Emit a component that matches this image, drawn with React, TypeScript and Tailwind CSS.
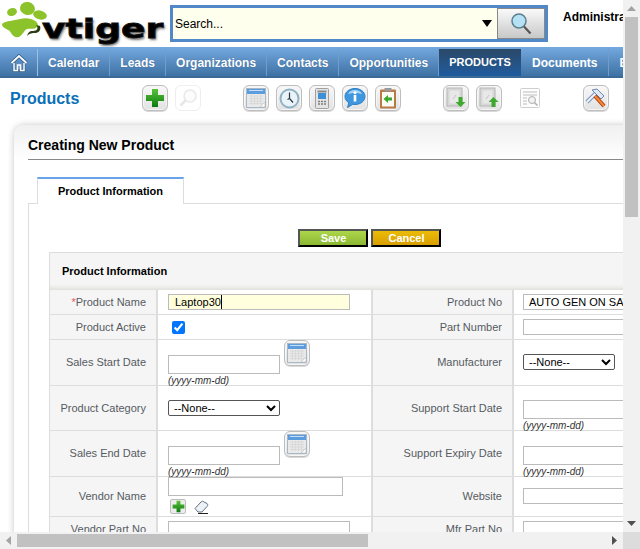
import React from "react";

const FONT = "font-['Liberation_Sans',Arial,sans-serif]";

function Frame({ children, faded }: { children: React.ReactNode; faded?: boolean }) {
  return (
    <div
      className={
        faded
          ? "w-[26px] h-[26px] rounded-[6px] border border-[#eeeeee] bg-white flex items-center justify-center shrink-0"
          : "w-[26px] h-[26px] rounded-[6px] border border-[#bdbdbd] bg-gradient-to-b from-[#f8f8f8] to-[#e2e2e2] flex items-center justify-center shrink-0 shadow-[inset_0_0_0_1px_#f6f6f6,0_1px_0_#d8d8d8]"
      }
    >
      {children}
    </div>
  );
}

const PlusIcon = ({ s = 20 }: { s?: number }) => (
  <svg width={s} height={s} viewBox="0 0 20 20">
    <defs>
      <linearGradient id="pg" x1="0" y1="0" x2="0" y2="1">
        <stop offset="0" stopColor="#58c43a" />
        <stop offset="1" stopColor="#0d7a10" />
      </linearGradient>
    </defs>
    <path d="M7 1h6v6h6v6h-6v6H7v-6H1V7h6z" fill="url(#pg)" />
  </svg>
);

const SearchFaded = () => (
  <svg width="20" height="20" viewBox="0 0 20 20" fill="none">
    <circle cx="12" cy="8" r="6" stroke="#e8e8e8" strokeWidth="1.5" fill="#fcfcfc" />
    <path d="M7.5 12.500L2.500 17.500" stroke="#e6e6e6" strokeWidth="2.500" />
  </svg>
);

const CalIcon = ({ s = 20 }: { s?: number }) => (
  <svg width={s} height={s} viewBox="0 0 20 20">
    <rect x="0.500" y="0.500" width="19" height="19" fill="#e9e9e9" stroke="#a9b8c6" />
    <rect x="1" y="1" width="18" height="5" fill="#5d9ddd" />
    <rect x="3" y="2" width="14" height="1" fill="#c5def4" />
    <path d="M3 8h14M3 10.500h14M3 13h14M3 15.500h14M5.500 7v10M8.500 7v10M11.500 7v10M14.500 7v10" stroke="#d6d6d6" strokeWidth="0.800" />
    <path d="M14 19l5-5v5z" fill="#fbfbfb" stroke="#bbbbbb" strokeWidth="0.600" />
  </svg>
);

const ClockIcon = () => (
  <svg width="21" height="21" viewBox="0 0 21 21" fill="none">
    <circle cx="10.500" cy="10.500" r="9" fill="#e9f3f8" stroke="#8fb2c4" strokeWidth="2" />
    <path d="M10.500 4.500v6l3.500 4M10.500 10.500l-2 1" stroke="#2a3a44" strokeWidth="1.200" />
  </svg>
);

const CalcIcon = () => (
  <svg width="14" height="21" viewBox="0 0 14 21">
    <rect x="0.500" y="0.500" width="13" height="20" rx="1" fill="#e4e4e4" stroke="#a0a0a0" />
    <rect x="2.500" y="2.500" width="9" height="2" fill="#8a8a8a" />
    <rect x="3" y="5" width="8" height="6" fill="#3f8fd8" />
    <path d="M3 13.500h2M6 13.500h2M9 13.500h2M3 16h2M6 16h2M9 16h2" stroke="#7f7f7f" strokeWidth="1.500" />
  </svg>
);

const ChatIcon = () => (
  <svg width="22" height="22" viewBox="0 0 22 22">
    <path d="M11 1.500c5.500 0 10 3.400 10 8s-4.500 8-10 8c-.8 0-1.500 0-2.200-.2L3.500 20.500l1.300-4.700C2.400 14.300 1 12 1 9.500c0-4.600 4.500-8 10-8z" fill="#3f97e0" stroke="#2f7fc8" />
    <path d="M4 7c1.500-3 4-4 7-4s5.500 1 7 4c-4-1.500-10-1.500-14 0z" fill="#a9d6f6" />
    <rect x="9.700" y="8" width="2.600" height="6.500" fill="#ffffff" />
    <circle cx="11" cy="5.800" r="1.500" fill="#ffffff" />
  </svg>
);

const ClipIcon = () => (
  <svg width="18" height="22" viewBox="0 0 18 22">
    <rect x="1" y="2.500" width="16" height="19" rx="1" fill="#b87b46" />
    <rect x="3" y="5" width="12" height="14.500" fill="#fbfbf4" />
    <rect x="5.500" y="1" width="7" height="3.500" fill="#9a9a9a" />
    <path d="M4.500 12l4.500-4v2.500h4v3H9V16z" fill="#39a72c" />
  </svg>
);

const DocArrow = ({ up }: { up?: boolean }) => (
  <svg width="22" height="22" viewBox="0 0 22 22">
    <rect x="2" y="1" width="15" height="18" fill="#dcdcdc" stroke="#b4b4b4" />
    <rect x="4" y="3" width="11" height="14" fill="#e8e8e8" stroke="#cfcfcf" strokeWidth="0.700" />
    <path d="M8 12l3-4" stroke="#c4c4c4" />
    {up ? (
      <path d="M15.500 10l5 5h-3v5h-4v-5h-3z" fill="#3ea92e" />
    ) : (
      <path d="M13.500 10h4v5h3l-5 5-5-5h3z" fill="#3ea92e" />
    )}
  </svg>
);

const FindIcon = () => (
  <svg width="20" height="20" viewBox="0 0 20 20" fill="none">
    <rect x="0.500" y="0.500" width="19" height="19" rx="1" stroke="#cfcfcf" fill="#fdfdfd" />
    <path d="M3 4h14M3 7h14M3 10h4M3 13h4M3 16h4" stroke="#bcbcbc" />
    <circle cx="12" cy="12" r="3.500" stroke="#adadad" fill="#f2f2f2" />
    <path d="M14.500 14.500l3 3" stroke="#adadad" strokeWidth="1.500" />
  </svg>
);

const HammerIcon = () => (
  <svg width="22" height="22" viewBox="0 0 22 22" fill="none">
    <path d="M2 15l9-9" stroke="#7794be" strokeWidth="4" />
    <path d="M2 15l9-9" stroke="#eef3fa" strokeWidth="2" />
    <path d="M7 3l5-1 7 7-3 3-6-6z" fill="#dfe8f4" stroke="#6e86ab" />
    <path d="M10 9l9 10" stroke="#b03a10" strokeWidth="4" />
    <path d="M10 9l9 10" stroke="#f58a32" strokeWidth="2" />
  </svg>
);

const HomeIcon = () => (
  <svg width="18" height="18" viewBox="0 0 18 18" fill="none">
    <path d="M1.500 9L9 2l7.500 7" stroke="#2f5a85" strokeWidth="3.400" />
    <path d="M4 9v7.500h10V9" fill="#5d8fc0" stroke="#2f5a85" strokeWidth="2.600" />
    <path d="M1.500 9L9 2l7.500 7" stroke="#ffffff" strokeWidth="1.800" />
    <path d="M4 9v7.500h3.500V11h3v5.500H14V9" stroke="#ffffff" strokeWidth="1.500" />
  </svg>
);

const Logo = () => (
  <div className="relative w-[170px] h-[47px] shrink-0 overflow-hidden">
    <svg className="absolute left-0 top-0" width="52" height="44" viewBox="0 0 52 44">
      <g fill="#8dc32a">
        <ellipse cx="12" cy="12" rx="5" ry="4" transform="rotate(-15 12 12)" />
        <ellipse cx="27.500" cy="8.500" rx="7.500" ry="6.500" transform="rotate(10 27.500 8.500)" />
        <ellipse cx="40" cy="15" rx="7" ry="4.500" transform="rotate(15 40 15)" />
        <path d="M2 24c3-3 9-3 13-4 5-1 10-3 16-1 6 2 8 5 6 8-3 3-7 1-10 2-3 1-4 6-8 8-4 1-6-1-8-4-1-4-9-4-9-9z" />
      </g>
      <path d="M36 25c3 3 1 6-3 6-4 0-5 2-6 5 3-3 5-3 9-3 4-1 5-4 4-7z" fill="#2e3a12" />
    </svg>
    <span className="absolute left-[42px] top-[13px] block origin-left scale-x-[1.39] font-['DejaVu_Sans',sans-serif] font-bold text-[26px] leading-[32px] text-black [-webkit-text-stroke:0.8px_#111] [text-shadow:1px_2px_2px_rgba(0,0,0,0.55)]">
      vtiger
    </span>
  </div>
);

const nav = ["Calendar", "Leads", "Organizations", "Contacts", "Opportunities"];

function Nav() {
  return (
    <div className="h-[31px] bg-gradient-to-b from-[#74a9e0] to-[#3f72a4] border-b-2 border-b-[#3c6a96] flex items-stretch shrink-0 text-white font-bold text-[12px]">
      <div className="w-[38px] flex items-center justify-center border-r border-r-[#9cc0e2] mt-[2px] shrink-0">
        <HomeIcon />
      </div>
      {nav.map((n) => (
        <div key={n} className="px-[10px] flex items-center border-r border-r-[#6f9dca] mt-[2px] shrink-0 [text-shadow:0_0_1px_rgba(40,70,110,0.6)]">
          {n}
        </div>
      ))}
      <div className="w-[82px] flex items-center justify-center shrink-0 mt-[2px] text-[11px] bg-gradient-to-b from-[#2a4867] to-[#1f5c9f]">
        PRODUCTS
      </div>
      <div className="px-[11px] flex items-center border-r border-r-[#6f9dca] mt-[2px] shrink-0">Documents</div>
      <div className="px-[10px] flex items-center mt-[2px] shrink-0">Email</div>
    </div>
  );
}

function Toolbar() {
  return (
    <div className="h-[47px] flex items-start pt-[7px] shrink-0 bg-white">
      <div className="w-[142px] pl-[10px] text-[16px] font-bold text-[#0a70b8] leading-[28px] shrink-0">Products</div>
      <div className="flex gap-[7px] shrink-0">
        <Frame><PlusIcon /></Frame>
        <Frame faded><SearchFaded /></Frame>
      </div>
      <div className="flex gap-[7px] ml-[42px] shrink-0">
        <Frame><CalIcon /></Frame>
        <Frame><ClockIcon /></Frame>
        <Frame><CalcIcon /></Frame>
        <Frame><ChatIcon /></Frame>
        <Frame><ClipIcon /></Frame>
      </div>
      <div className="flex gap-[7px] ml-[42px] shrink-0">
        <Frame><DocArrow /></Frame>
        <Frame><DocArrow up /></Frame>
      </div>
      <div className="ml-[18px] mt-[3px] shrink-0"><FindIcon /></div>
      <div className="ml-[43px] shrink-0"><Frame><HammerIcon /></Frame></div>
    </div>
  );
}

const inputBase = "block h-[16px] border border-[#bbbbbb] bg-white text-[11px] px-[5px] text-black outline-none";
const dateInput = "block w-[112px] h-[19px] border border-[#bbbbbb] bg-white";

function Fmt() {
  return <div className="text-[10px] italic leading-[11px] text-[#333]">(yyyy-mm-dd)</div>;
}

function Label({ children }: { children: React.ReactNode }) {
  return (
    <div className="bg-[#f5f5f5] flex items-center justify-end pr-[10px] text-[11px] text-[#555b62] border-r-2 border-r-[#dddddd] border-b border-b-[#dddddd]">
      {children}
    </div>
  );
}

function Value({ children, border = true, left = true }: { children?: React.ReactNode; border?: boolean; left?: boolean }) {
  return (
    <div className={`${left ? "pl-[10px]" : "pl-[9px]"} bg-white border-b border-b-[#dddddd] ${border ? "border-r-2 border-r-[#dddddd]" : ""}`}>
      {children}
    </div>
  );
}

function DateWithIcon() {
  return (
    <div className="flex items-start">
      <div className="mt-[15px]">
        <div className={dateInput} />
        <div className="mt-[1px]"><Fmt /></div>
      </div>
      <div className="ml-[4px]">
        <Frame><CalIcon /></Frame>
      </div>
    </div>
  );
}

function Table() {
  return (
    <div className="w-[900px] border-l border-l-[#dddddd]">
      <div className="h-[38px] bg-[#f5f5f5] border-t border-t-[#dddddd] flex items-center pl-[12px] pb-[1px] text-[11px] font-bold text-black shadow-[inset_0_-5px_4px_-3px_#dcdcd8]">
        Product Information
      </div>
      <div className="grid grid-cols-[108px_215px_141px_1fr] grid-rows-[25px_25px_46px_45px_46px_40px_25px] leading-none">
        <Label><span className="text-[#e8585a]">*</span>Product Name</Label>
        <Value>
          <div className="mt-[4px] w-[182px] h-[16px] border border-[#bbbbbb] bg-[#ffffdd] pl-[5px] text-[11px] text-black leading-[14px] flex">
            <span className="border-r border-r-black pl-[1px]">Laptop30</span>
          </div>
        </Value>
        <Label>Product No</Label>
        <Value border={false} left={false}>
          <input readOnly value="AUTO GEN ON SAVE" className={`${inputBase} w-[182px] mt-[4px]`} />
        </Value>

        <Label>Product Active</Label>
        <Value>
          <input type="checkbox" readOnly checked className="block ml-[4px] mt-[6px] w-[13px] h-[13px] m-0" />
        </Value>
        <Label>Part Number</Label>
        <Value border={false} left={false}><input readOnly className={`${inputBase} w-[182px] mt-[4px]`} /></Value>

        <Label>Sales Start Date</Label>
        <Value><DateWithIcon /></Value>
        <Label>Manufacturer</Label>
        <Value border={false} left={false}>
          <select className="block w-[92px] h-[16px] mt-[14px] border border-[#555] rounded-[2px] text-[11px] bg-white text-black pl-[1px]" defaultValue="n"><option value="n">--None--</option></select>
        </Value>

        <Label>Product Category</Label>
        <Value>
          <select className="block w-[112px] h-[16px] mt-[14px] border border-[#555] rounded-[2px] text-[11px] bg-white text-black pl-[1px]" defaultValue="n"><option value="n">--None--</option></select>
        </Value>
        <Label>Support Start Date</Label>
        <Value border={false} left={false}>
          <div className="mt-[14px] w-[182px] h-[19px] border border-[#bbbbbb] bg-white" />
          <div className="mt-[1px]"><Fmt /></div>
        </Value>

        <Label>Sales End Date</Label>
        <Value><DateWithIcon /></Value>
        <Label>Support Expiry Date</Label>
        <Value border={false} left={false}>
          <div className="mt-[15px] w-[182px] h-[19px] border border-[#bbbbbb] bg-white" />
          <div className="mt-[1px]"><Fmt /></div>
        </Value>

        <Label>Vendor Name</Label>
        <Value>
          <div className="w-[175px] h-[19px] border border-[#bbbbbb] bg-white" />
          <div className="flex items-center mt-[3px] ml-[2px]">
            <div className="w-[16px] h-[15px] border border-[#bdbdbd] rounded-[2px] flex items-center justify-center bg-[#ececec]"><PlusIcon s={13} /></div>
            <svg className="ml-[8px]" width="15" height="14" viewBox="0 0 15 14" fill="none">
              <path d="M1 8.500l6-6.500c1-1 2-1 3 0l3 1.500c1 1 1 2 0 3L8 12H4z" fill="#eef2f7" stroke="#5f7083" />
              <path d="M4 13.500h10" stroke="#222" />
            </svg>
          </div>
        </Value>
        <Label>Website</Label>
        <Value border={false} left={false}><input readOnly className={`${inputBase} w-[182px] mt-[11px]`} /></Value>

        <Label>Vendor Part No</Label>
        <Value><input readOnly className={`${inputBase} w-[182px] mt-[4px]`} /></Value>
        <Label>Mfr Part No</Label>
        <Value border={false} left={false}><input readOnly className={`${inputBase} w-[182px] mt-[4px]`} /></Value>
      </div>
    </div>
  );
}

function Card() {
  return (
    <div className="ml-[14px] w-[900px] rounded-tl-[10px] bg-white shadow-[0_0_7px_rgba(0,0,0,0.22)] pl-[14px]">
      <div className="-ml-[14px] pl-[14px] rounded-tl-[10px] bg-gradient-to-b from-[#f0f0f0] to-white">
        <div className="h-[35px] border-b border-b-[#888888] flex items-end text-[14px] font-bold text-black pb-[6px] leading-[16px]">
          Creating New Product
        </div>
      </div>
      <div className="pt-[17px] pl-[9px] relative z-10">
        <div className="w-[147px] h-[27px] border-t-2 border-t-[#68a5e8] border-x border-x-[#dddddd] bg-white flex items-center justify-center text-[11px] font-bold text-black -mb-[1px]">
          Product Information
        </div>
      </div>
      <div className="border-l border-t border-[#dddddd] pl-[20px] pt-[25px]">
        <div className="flex ml-[249px] gap-[3px]">
          <div className="w-[70px] h-[18px] border-2 border-t-[#555] border-l-[#555] border-r-black border-b-black bg-gradient-to-b from-[#acd64a] to-[#8cb732] text-white font-bold text-[11px] flex items-center justify-center pl-[1px]">Save</div>
          <div className="w-[70px] h-[18px] border-2 border-t-[#555] border-l-[#555] border-r-black border-b-black bg-gradient-to-b from-[#ecbc08] to-[#d89e00] text-white font-bold text-[11px] flex items-center justify-center pl-[1px]">Cancel</div>
        </div>
        <div className="mt-[5px]"><Table /></div>
      </div>
    </div>
  );
}

function VScroll() {
  return (
    <div className="w-[17px] bg-[#f1f1f1] flex flex-col items-center shrink-0">
      <svg className="mt-[6px] shrink-0" width="9" height="5" viewBox="0 0 9 5"><path d="M4.500 0L9 5H0z" fill="#a3a3a3" /></svg>
      <div className="w-[13px] h-[200px] mt-[6px] bg-[#c1c1c1] shrink-0" />
      <div className="flex-1" />
      <svg className="mb-[6px] shrink-0" width="9" height="5" viewBox="0 0 9 5"><path d="M0 0h9L4.500 5z" fill="#505050" /></svg>
    </div>
  );
}

function HScroll() {
  return (
    <div className="h-[17px] flex shrink-0">
      <div className="w-[623px] bg-[#f1f1f1] flex items-center">
        <svg className="ml-[6px] shrink-0" width="5" height="9" viewBox="0 0 5 9"><path d="M5 0v9L0 4.500z" fill="#a3a3a3" /></svg>
        <div className="w-[351px] h-[13px] ml-[6px] bg-[#c1c1c1]" />
        <div className="flex-1" />
        <svg className="mr-[6px] shrink-0" width="5" height="9" viewBox="0 0 5 9"><path d="M0 0l5 4.500L0 9z" fill="#505050" /></svg>
      </div>
      <div className="w-[17px] bg-[#dcdcdc]" />
    </div>
  );
}

export default function App() {
  return (
    <div className={`w-[640px] h-[549px] flex flex-col overflow-hidden bg-white ${FONT}`}>
      <div className="flex h-[532px] shrink-0">
        <div className="w-[623px] overflow-hidden shrink-0">
          <div className="w-[1000px]">
            <div className="flex h-[47px]">
              <Logo />
              <div className="w-[378px] h-[37px] mt-[5px] border-[3px] border-[#5088c8] bg-[#ffffee] flex items-center shrink-0 relative">
                <span className="ml-[2px] text-[12px] text-black">Search...</span>
                <div className="flex-1" />
                <svg className="mr-[5px]" width="10" height="7" viewBox="0 0 10 7"><path d="M0 0h10L5 7z" fill="#000" /></svg>
                <div className="w-[48px] h-[31px] border border-[#888] bg-gradient-to-b from-[#fafafa] to-[#c8c8c8] flex items-center justify-center">
                  <svg width="22" height="24" viewBox="0 0 22 24" fill="none">
                    <circle cx="9" cy="9" r="7" fill="#b5e1f4" stroke="#5b7f8f" strokeWidth="1.500" />
                    <path d="M14 14.500l6.500 7" stroke="#555" strokeWidth="2.200" />
                  </svg>
                </div>
              </div>
              <div className="ml-[15px] mt-[9px] text-[12px] font-bold text-black leading-[16px]">Administrator</div>
            </div>
            <Nav />
            <Toolbar />
            <Card />
          </div>
        </div>
        <VScroll />
      </div>
      <HScroll />
    </div>
  );
}
